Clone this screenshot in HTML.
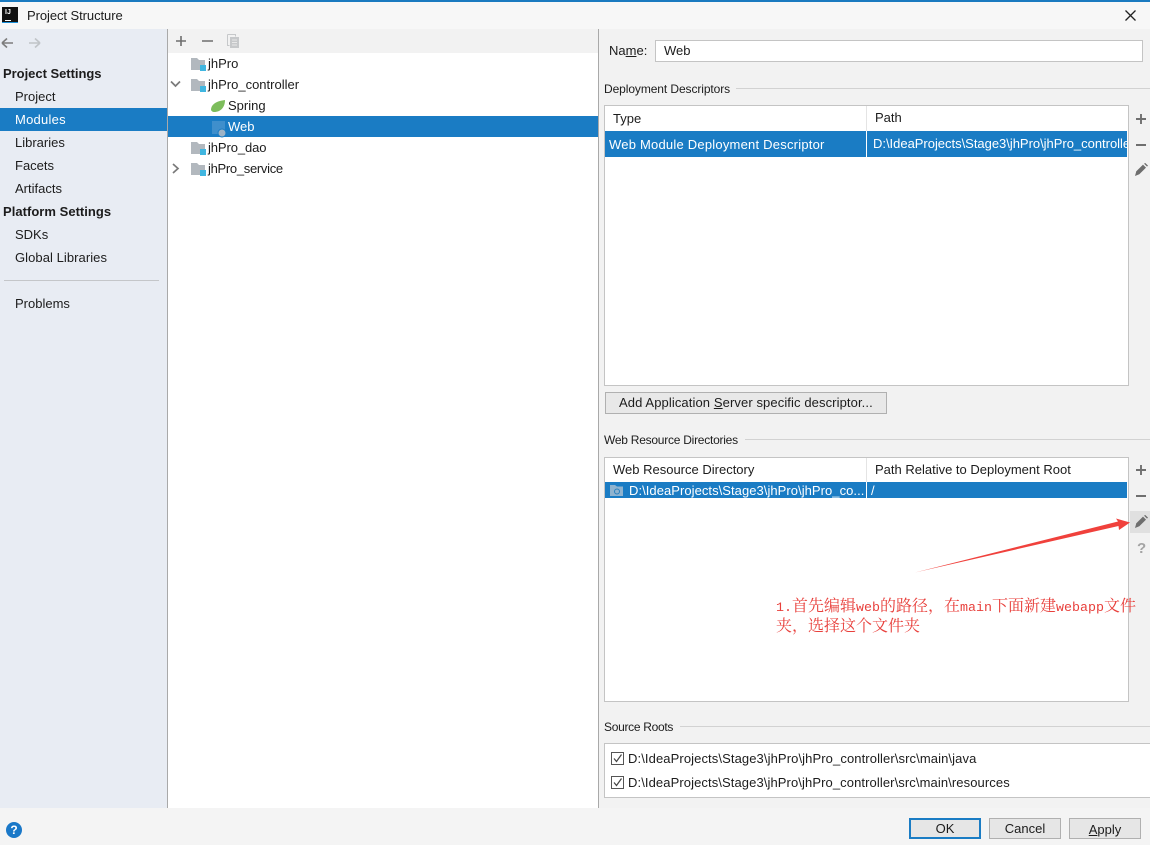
<!DOCTYPE html>
<html><head><meta charset="utf-8">
<style>
html,body{margin:0;padding:0}
body{width:1150px;height:845px;position:relative;overflow:hidden;background:#f2f2f2;font-family:"Liberation Sans","Noto Sans CJK SC",sans-serif;font-size:13px;color:#1c1c1c}
.a{position:absolute}
.t{position:absolute;white-space:nowrap;line-height:16px;height:16px}
.w{color:#fff}
.b{font-weight:bold}
svg{position:absolute;overflow:visible}
.m{font-family:"Liberation Mono",monospace;font-size:13.33px;line-height:1}
.n{position:absolute;left:776px;height:20px;font-family:'Liberation Serif','Noto Serif CJK SC',serif;font-size:16px;line-height:20px;color:#e8403c;white-space:nowrap}
</style></head><body>
<!-- title -->
<div class="a" style="left:0;top:0;width:1150px;height:2px;background:#1a7ac0"></div>
<div class="a" style="left:0;top:2px;width:1150px;height:27px;background:#f7f7f7"></div>
<div class="a" style="left:2px;top:7px;width:16px;height:16px;background:#111"></div>
<div class="a" style="left:5px;top:9px;font:bold 7px/8px 'Liberation Sans',sans-serif;color:#fff">IJ</div>
<div class="a" style="left:5px;top:20px;width:6px;height:1px;background:#fff"></div>
<div class="a" style="left:2px;top:22px;width:16px;height:1px;background:#1a8fd8"></div>
<div class="t" style="left:27px;top:8px;letter-spacing:-.07px">Project Structure</div>
<svg style="left:0;top:0" width="1150" height="30"><path d="M1125.500 10.500L1135.500 20.500M1135.500 10.500L1125.500 20.500" stroke="#222" stroke-width="1.300" fill="none"/></svg>

<!-- sidebar -->
<div class="a" style="left:0;top:29px;width:167px;height:779px;background:#e8ecf3"></div>
<div class="a" style="left:167px;top:29px;width:1px;height:779px;background:#a9a9a9"></div>
<svg style="left:0;top:30px" width="50" height="24"><path d="M2 13H13M2 13L7 8.500M2 13L7 17.500" stroke="#7d7d7d" stroke-width="1.600" fill="none"/><path d="M40 13H29M40 13L35 8.500M40 13L35 17.500" stroke="#c0c4c8" stroke-width="1.600" fill="none"/></svg>
<div class="t b" style="left:3px;top:66px;letter-spacing:-.03px">Project Settings</div>
<div class="t" style="left:15px;top:89px">Project</div>
<div class="a" style="left:0;top:108px;width:167px;height:23px;background:#1a7cc4"></div>
<div class="t w" style="left:15px;top:112px;letter-spacing:.25px">Modules</div>
<div class="t" style="left:15px;top:135px">Libraries</div>
<div class="t" style="left:15px;top:158px">Facets</div>
<div class="t" style="left:15px;top:181px">Artifacts</div>
<div class="t b" style="left:3px;top:204px;letter-spacing:.03px">Platform Settings</div>
<div class="t" style="left:15px;top:227px">SDKs</div>
<div class="t" style="left:15px;top:250px;letter-spacing:.06px">Global Libraries</div>
<div class="a" style="left:4px;top:280px;width:155px;height:1px;background:#c4c6c9"></div>
<div class="t" style="left:15px;top:296px">Problems</div>

<!-- tree -->
<div class="a" style="left:168px;top:29px;width:430px;height:24px;background:#f2f2f2"></div>
<div class="a" style="left:168px;top:53px;width:430px;height:755px;background:#fff"></div>
<div class="a" style="left:598px;top:29px;width:1px;height:779px;background:#a9a9a9"></div>
<svg style="left:168px;top:29px" width="90" height="24"><path d="M8 12H18M13 7V17M34 12H45" stroke="#6e6e6e" stroke-width="1.600" fill="none"/><path d="M59.500 5.500H67.500V7.500M59.500 5.500V16.500H61.500" stroke="#c6c8ca" fill="none"/><rect x="62" y="8" width="9" height="11" fill="#c6c8ca"/><path d="M64 11H69M64 13.500H69M64 16H69" stroke="#e8e8e8"/></svg>
<div class="a" style="left:168px;top:116px;width:430px;height:21px;background:#1a7cc4"></div>
<svg style="left:168px;top:53px" width="60" height="130">
<path d="M23 5H29L31 7H37V17H23Z" fill="#b2b8be"/><rect x="32" y="12" width="6" height="6" fill="#40b6e0"/>
<path d="M23 26H29L31 28H37V38H23Z" fill="#b2b8be"/><rect x="32" y="33" width="6" height="6" fill="#40b6e0"/>
<path d="M23 89H29L31 91H37V101H23Z" fill="#b2b8be"/><rect x="32" y="96" width="6" height="6" fill="#40b6e0"/>
<path d="M23 110H29L31 112H37V122H23Z" fill="#b2b8be"/><rect x="32" y="117" width="6" height="6" fill="#40b6e0"/>
<path d="M3 28.500L7.500 33L12 28.500" stroke="#7a7a7a" stroke-width="1.700" fill="none"/>
<path d="M5 111L10 115.500L5 120" stroke="#7a7a7a" stroke-width="1.700" fill="none"/>
<path d="M43 57C43 51 49 48 57 47C57 54 53 59 46 59C44.500 59 43.500 58 43 57Z" fill="#7dbd5c"/>
<rect x="44" y="68" width="13" height="13" fill="#3f8fcc"/><circle cx="54" cy="80" r="4" fill="#9db3c6" stroke="#1a7cc4"/>
</svg>
<div class="t" style="left:208px;top:56px">jhPro</div>
<div class="t" style="left:208px;top:77px">jhPro_controller</div>
<div class="t" style="left:228px;top:98px">Spring</div>
<div class="t w" style="left:228px;top:119px">Web</div>
<div class="t" style="left:208px;top:140px;letter-spacing:-.1px">jhPro_dao</div>
<div class="t" style="left:208px;top:161px;letter-spacing:-.3px">jhPro_service</div>

<!-- name -->
<div class="t" style="left:609px;top:43px">Na<u>m</u>e:</div>
<div class="a" style="left:655px;top:40px;width:486px;height:20px;background:#fff;border:1px solid #c4c4c4"></div>
<div class="t" style="left:664px;top:43px">Web</div>

<!-- deployment -->
<div class="t" style="left:604px;top:81px;font-size:12px;letter-spacing:-.09px">Deployment Descriptors</div>
<div class="a" style="left:736px;top:88px;width:414px;height:1px;background:#d2d2d2"></div>
<div class="a" style="left:604px;top:105px;width:523px;height:279px;background:#fff;border:1px solid #c4c4c4"></div>
<div class="a" style="left:866px;top:106px;width:1px;height:25px;background:#e4e4e4"></div>
<div class="t" style="left:613px;top:111px">Type</div>
<div class="t" style="left:875px;top:110px">Path</div>
<div class="a" style="left:605px;top:131px;width:522px;height:26px;background:#1a7cc4;overflow:hidden">
<div class="t w" style="left:4px;top:6px;letter-spacing:.22px">Web Module Deployment Descriptor</div>
<div class="a" style="left:261px;top:0;width:1px;height:26px;background:#fff"></div>
<div class="t w" style="left:268px;top:5px;font-size:13px;letter-spacing:-.02px">D:\IdeaProjects\Stage3\jhPro\jhPro_controller</div>
</div>
<div class="a" style="left:1128px;top:105px;width:1px;height:281px;background:#c4c4c4"></div>
<svg style="left:1128px;top:105px" width="22" height="90"><path d="M8 14H18M13 9V19M8 40H18" stroke="#6f6f6f" stroke-width="1.900" fill="none"/><path d="M7 71L8.300 66.300L15 59.600L18 62.600L11.300 69.300Z" fill="#6e6e6e"/><path d="M16 58.600L17.300 58L20 60.600L19 61.600Z" fill="#6e6e6e"/></svg>

<div class="a" style="left:605px;top:392px;width:280px;height:20px;background:#e8e8e8;border:1px solid #b0b0b0"></div>
<div class="t" style="left:619px;top:395px;letter-spacing:.1px">Add Application <u>S</u>erver specific descriptor...</div>

<!-- web resource -->
<div class="t" style="left:604px;top:432px;font-size:12px;letter-spacing:-.25px">Web Resource Directories</div>
<div class="a" style="left:745px;top:439px;width:405px;height:1px;background:#d2d2d2"></div>
<div class="a" style="left:604px;top:457px;width:523px;height:243px;background:#fff;border:1px solid #c4c4c4"></div>
<div class="a" style="left:866px;top:458px;width:1px;height:24px;background:#e4e4e4"></div>
<div class="t" style="left:613px;top:462px">Web Resource Directory</div>
<div class="t" style="left:875px;top:462px">Path Relative to Deployment Root</div>
<div class="a" style="left:605px;top:482px;width:522px;height:16px;background:#1a7cc4"></div>
<div class="a" style="left:866px;top:482px;width:1px;height:16px;background:#fff"></div>
<svg style="left:605px;top:482px" width="24" height="16"><path d="M5 3H10L12 4.500H18V14H5Z" fill="#8fb3cf"/><circle cx="12" cy="9.500" r="2.500" fill="none" stroke="#2a80bd"/></svg>
<div class="t w" style="left:629px;top:483px;letter-spacing:.05px">D:\IdeaProjects\Stage3\jhPro\jhPro_co...</div>
<div class="t w" style="left:871px;top:483px">/</div>
<div class="a" style="left:1128px;top:457px;width:1px;height:245px;background:#c4c4c4"></div>
<div class="a" style="left:1130px;top:511px;width:20px;height:22px;background:#e0e0e0"></div>
<svg style="left:1128px;top:457px" width="22" height="110"><path d="M8 13H18M13 8V18M8 39H18" stroke="#6f6f6f" stroke-width="1.900" fill="none"/><path d="M7 71L8.300 66.300L15 59.600L18 62.600L11.300 69.300Z" fill="#6e6e6e"/><path d="M16 58.600L17.300 58L20 60.600L19 61.600Z" fill="#6e6e6e"/></svg>
<div class="a" style="left:1137px;top:540px;font:bold 15px/18px 'Liberation Sans',sans-serif;color:#a4a4a4">?</div>

<!-- annotation -->
<svg style="left:0;top:0" width="1150" height="845"><path d="M915 572.500L1118 521.500L1116 518.500L1130 522.500L1119 530L1118.500 526Z" fill="#f0413c"/></svg>
<div class="n" style="top:597px"><span class="m">1.</span>首先编辑<span class="m">web</span>的路径，在<span class="m">main</span>下面新建<span class="m">webapp</span>文件</div>
<div class="n" style="top:617px">夹，选择这个文件夹</div>

<!-- source roots -->
<div class="t" style="left:604px;top:719px;font-size:12px;letter-spacing:-.3px">Source Roots</div>
<div class="a" style="left:680px;top:726px;width:470px;height:1px;background:#d2d2d2"></div>
<div class="a" style="left:604px;top:743px;width:546px;height:53px;background:#fff;border:1px solid #c4c4c4;border-right:0"></div>
<svg style="left:604px;top:743px" width="30" height="54"><rect x="7.500" y="9.500" width="12" height="12" fill="#fff" stroke="#555"/><path d="M10 15.500L12.500 18.500L17.500 11.500" stroke="#444" stroke-width="1.200" fill="none"/><rect x="7.500" y="33.500" width="12" height="12" fill="#fff" stroke="#555"/><path d="M10 39.500L12.500 42.500L17.500 35.500" stroke="#444" stroke-width="1.200" fill="none"/></svg>
<div class="t" style="left:628px;top:751px;letter-spacing:.1px">D:\IdeaProjects\Stage3\jhPro\jhPro_controller\src\main\java</div>
<div class="t" style="left:628px;top:775px;letter-spacing:.095px">D:\IdeaProjects\Stage3\jhPro\jhPro_controller\src\main\resources</div>

<!-- footer -->
<div class="a" style="left:0;top:808px;width:1150px;height:37px;background:#f4f4f4"></div>
<div class="a" style="left:6px;top:822px;width:16px;height:16px;border-radius:50%;background:#1a78c8;color:#fff;font:bold 12px/16px 'Liberation Sans',sans-serif;text-align:center">?</div>
<div class="a" style="left:909px;top:818px;width:68px;height:17px;background:#e6e6e6;border:2px solid #1a7cc4;text-align:center;line-height:17px">OK</div>
<div class="a" style="left:989px;top:818px;width:70px;height:19px;background:#e6e6e6;border:1px solid #b0b0b0;text-align:center;line-height:20px">Cancel</div>
<div class="a" style="left:1069px;top:818px;width:70px;height:19px;background:#e6e6e6;border:1px solid #b0b0b0;text-align:center;line-height:21px"><u>A</u>pply</div>
</body></html>
